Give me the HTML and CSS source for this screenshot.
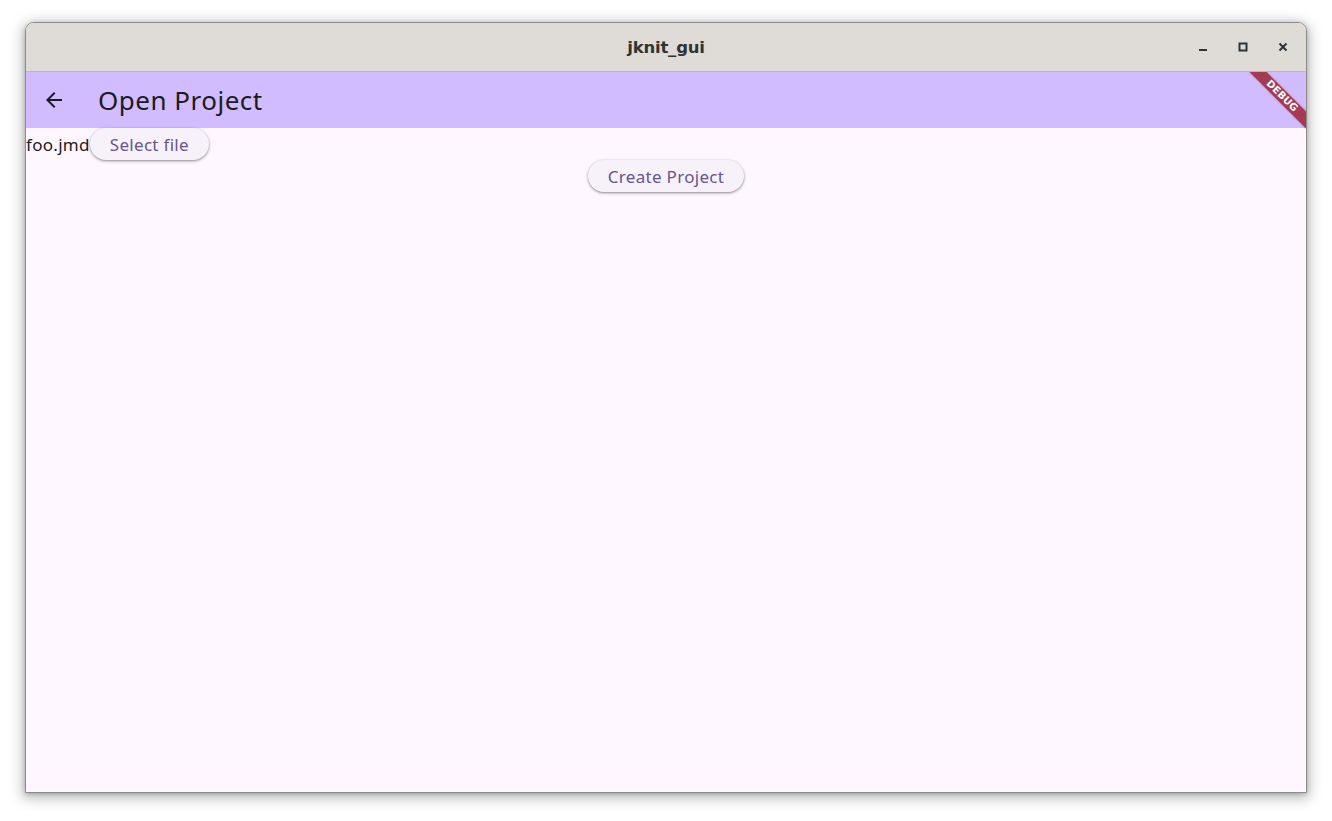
FILE: index.html
```html
<!DOCTYPE html>
<html>
<head>
<meta charset="utf-8">
<link rel="stylesheet" href="styles.css">
</head>
<body>
<div class="window">
  <div class="titlebar">
    <div class="title">jknit_gui</div>
    <div class="controls">
      <span class="ctl"><svg width="10" height="10" viewBox="0 0 10 10"><rect x="1" y="7" width="8" height="2" fill="#2e3436"/></svg></span>
      <span class="ctl"><svg width="10" height="10" viewBox="0 0 10 10"><rect x="1.5" y="1.5" width="7" height="7" fill="none" stroke="#2e3436" stroke-width="2"/></svg></span>
      <span class="ctl"><svg width="10" height="10" viewBox="0 0 10 10"><path d="M1.5 1.5 L8.5 8.5 M8.5 1.5 L1.5 8.5" stroke="#2e3436" stroke-width="2"/></svg></span>
    </div>
  </div>
  <div class="app">
    <div class="appbar">
      <div class="leading">
        <svg width="24" height="24" viewBox="0 0 24 24"><path d="M20 11H7.83l5.59-5.59L12 4l-8 8 8 8 1.41-1.41L7.83 13H20v-2z" fill="#1d1b20"/></svg>
      </div>
      <div class="apptitle">Open Project</div>
    </div>
    <div class="content">
      <div class="row">
        <span class="filename">foo.jmd</span>
        <button class="btn">Select file</button>
      </div>
      <button class="btn">Create Project</button>
    </div>
    <div class="banner">DEBUG</div>
  </div>
</div>
</body>
</html>
```
FILE: styles.css
```css
html, body {
  margin: 0;
  padding: 0;
  background: #ffffff;
}
body {
  padding: 22px 0 0 25px;
  width: 1332px;
  height: 821px;
  box-sizing: border-box;
  overflow: hidden;
}
.window {
  width: 1280px;
  border: 1px solid #8e8c8a;
  border-radius: 9px 9px 0 0;
  box-shadow: 0 3px 14px 2px rgba(0,0,0,0.28), 0 1px 4px rgba(0,0,0,0.2);
  overflow: hidden;
  background: #fef7ff;
}
.titlebar {
  height: 48px;
  background: #dfdcd8;
  border-bottom: 1px solid #bdb9b5;
  position: relative;
  display: flex;
  align-items: center;
  justify-content: center;
}
.title {
  font-family: "DejaVu Sans", sans-serif;
  font-weight: bold;
  font-size: 16.5px;
  color: #2e3436;
  letter-spacing: -0.2px;
}
.controls {
  position: absolute;
  right: 3px;
  top: 0;
  height: 48px;
  display: flex;
  align-items: center;
}
.ctl {
  width: 40px;
  height: 24px;
  display: flex;
  align-items: center;
  justify-content: center;
}
.app {
  position: relative;
  height: 720px;
  overflow: hidden;
  font-family: "Noto Sans", sans-serif;
}
.appbar {
  height: 56px;
  background: #d0bcff;
  display: flex;
  align-items: center;
}
.leading {
  width: 56px;
  height: 56px;
  display: flex;
  align-items: center;
  justify-content: center;
}
.apptitle {
  margin-left: 16px;
  font-size: 26px;
  color: #1d1b20;
  letter-spacing: 0.5px;
}
.content {
  display: flex;
  flex-direction: column;
  align-items: center;
}
.row {
  align-self: stretch;
  display: flex;
  align-items: center;
}
.filename {
  font-size: 17px;
  color: #1d1b20;
  letter-spacing: 0.3px;
}
.btn {
  height: 32px;
  border: none;
  border-radius: 16px;
  background: #f7f2fa;
  color: #65558f;
  font-family: "Noto Sans", sans-serif;
  font-size: 17px;
  letter-spacing: 0.3px;
  padding: 0 20px;
  box-shadow: 0 1px 2px rgba(0,0,0,0.3), 0 1px 3px 1px rgba(0,0,0,0.12);
}
.banner {
  position: absolute;
  top: 18px;
  left: 1216px;
  width: 80px;
  height: 12px;
  transform: rotate(45deg);
  background: #a63a55;
  color: #fff;
  font-family: "DejaVu Sans", sans-serif;
  font-weight: bold;
  font-size: 10px;
  line-height: 12px;
  text-align: center;
  letter-spacing: 0.2px;
  box-shadow: 0 0 2px rgba(0,0,0,0.3);
}
```
